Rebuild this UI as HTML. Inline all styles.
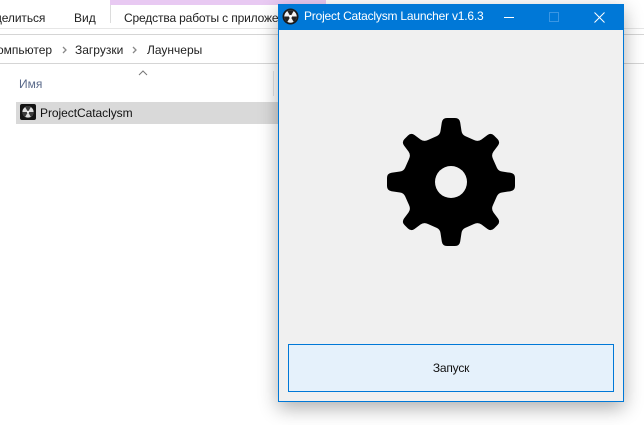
<!DOCTYPE html>
<html><head><meta charset="utf-8">
<style>
html,body{margin:0;padding:0;background:#fff}
body{width:644px;height:425px;position:relative;overflow:hidden;font-family:"Liberation Sans",sans-serif;color:#222}
.a{position:absolute;white-space:nowrap}
.t{font-size:12px;line-height:14px}
.l{position:absolute;background:#d9d9d9}
</style></head><body>
<div class="a" style="left:110px;top:0;width:216px;height:5px;background:#e8c9f2"></div>
<div class="l" style="left:110px;top:5px;width:1px;height:18px;background:#dcdcdc"></div>
<div class="a t" style="left:-20px;top:11px;letter-spacing:-.1px">Поделиться</div>
<div class="a t" style="left:74px;top:11px">Вид</div>
<div class="a t" style="left:124px;top:11px;letter-spacing:-.15px">Средства работы с приложениями</div>
<div class="l" style="left:0;top:28px;width:644px;height:1px;background:#e6e6e6"></div>
<div class="l" style="left:0;top:34px;width:644px;height:1px;background:#d5d5d5"></div>
<div class="l" style="left:0;top:63px;width:644px;height:1px;background:#d5d5d5"></div>
<div class="a t" style="left:-10px;top:43px">Компьютер</div>
<svg class="a" style="left:61px;top:45px" width="8" height="10"><path d="M2 2l3 3-3 3" fill="none" stroke="#888" stroke-width="1.3"/></svg>
<div class="a t" style="left:75px;top:43px">Загрузки</div>
<svg class="a" style="left:131px;top:45px" width="8" height="10"><path d="M2 2l3 3-3 3" fill="none" stroke="#888" stroke-width="1.3"/></svg>
<div class="a t" style="left:147px;top:43px">Лаунчеры</div>
<svg class="a" style="left:138px;top:70px" width="10" height="7"><path d="M1 5l4-4 4 4" fill="none" stroke="#777" stroke-width="1"/></svg>
<div class="a t" style="left:19px;top:77px;color:#5a6a8a">Имя</div>
<div class="l" style="left:273px;top:71px;width:1px;height:25px;background:#e5e5e5"></div>
<div class="a" style="left:16px;top:102px;width:270px;height:22px;background:#d9d9d9"></div>
<svg class="a" style="left:20px;top:104px" width="16" height="16" viewBox="0 0 16 16">
<rect width="16" height="16" rx="2" fill="#141414"/>
<circle cx="8" cy="8" r="5.6" fill="#ddd"/>
<path d="M8 8L5.200 3.150A5.600 5.600 0 0 1 10.800 3.150ZM8 8L2.400 8A5.600 5.600 0 0 0 5.200 12.850ZM8 8L10.800 12.850A5.600 5.600 0 0 0 13.600 8Z" fill="#3a3a3a"/>
<circle cx="8" cy="8" r="1.2" fill="#eee"/>
</svg>
<div class="a t" style="left:40px;top:106px;color:#111;letter-spacing:-.05px">ProjectCataclysm</div>

<div class="a" style="left:278px;top:4px;width:346px;height:398px;box-sizing:border-box;background:#f0f0f0;border:1px solid #0078d7;box-shadow:0 6px 18px rgba(0,0,0,.32)">
<div class="a" style="left:0;top:0;width:344px;height:25px;background:#0078d7"></div>
</div>
<svg class="a" style="left:282px;top:8px" width="17" height="17" viewBox="0 0 17 17">
<circle cx="8.5" cy="8.5" r="8" fill="#1a1a1a"/>
<circle cx="8.5" cy="8.5" r="6.2" fill="#f2f2f2"/>
<path d="M8.500 8.500L5.400 3.130A6.200 6.200 0 0 1 11.600 3.130ZM8.500 8.500L2.300 8.500A6.200 6.200 0 0 0 5.400 13.870ZM8.500 8.500L11.600 13.870A6.200 6.200 0 0 0 14.700 8.500Z" fill="#222"/>
<circle cx="8.500" cy="8.500" r="1.500" fill="#fff"/>
</svg>
<div class="a" style="left:304px;top:9px;font-size:12px;line-height:15px;letter-spacing:-.2px;color:#fff">Project Cataclysm Launcher v1.6.3</div>
<div class="a" style="left:504px;top:17px;width:10px;height:1px;background:#fff"></div>
<div class="a" style="left:549px;top:12px;width:10px;height:10px;box-sizing:border-box;border:1px solid #3a96e3"></div>
<svg class="a" style="left:594px;top:12px" width="11" height="11"><path d="M.5.5l10 10M10.500.5l-10 10" stroke="#fff" stroke-width="1" fill="none"/></svg>

<svg class="a" style="left:381px;top:112px" width="140" height="140" viewBox="-70 -70 140 140">
<defs>
<path id="q" d="M0 0L0 -64L-4 -64Q-8.500 -64 -9.200 -59.500L-10.500 -51Q-11 -47.500 -14 -46L-23 -42Q-27 -40 -30.500 -42.500L-36.500 -47Q-40 -49.500 -43 -46.500L-46.500 -43Q-49.500 -40 -47 -36.500L-42.500 -30.500Q-40 -27 -42 -23L-46 -14Q-47.500 -11 -51 -10.500L-59.500 -9.200Q-64 -8.500 -64 -4L-64 0Z"/>
</defs>
<use href="#q"/><use href="#q" transform="scale(-1,1)"/><use href="#q" transform="scale(1,-1)"/><use href="#q" transform="scale(-1,-1)"/>
<circle r="16" fill="#f0f0f0"/>
</svg>

<div class="a" style="left:288px;top:344px;width:326px;height:48px;box-sizing:border-box;background:#e5f1fb;border:1px solid #0078d7"></div>
<div class="a" style="left:288px;top:361px;width:326px;text-align:center;font-size:12px;line-height:14px;letter-spacing:-.2px;color:#111">Запуск</div>
</body></html>
